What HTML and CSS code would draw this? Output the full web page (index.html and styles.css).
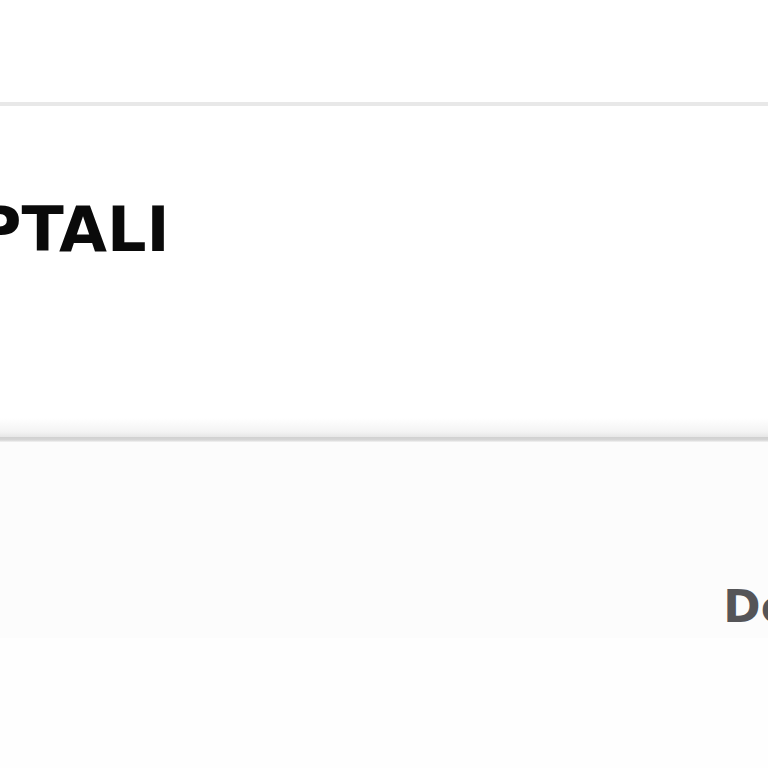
FILE: index.html
```html
<!DOCTYPE html>
<html lang="tr">
<head>
    <meta charset="UTF-8">
    <meta name="viewport" content="width=device-width, initial-scale=1.0">
    <title>Kaptali</title>
    <link rel="stylesheet" href="styles.css">
</head>
<body>
    <div class="top-space"></div>
    <!-- page header with the brand name -->
    <header class="header">
        <h1 class="brand">KAPTALI</h1>
    </header>
    <div class="header-shadow"></div>
    <!-- grey strip under the header -->
    <section class="strip">
        <p class="strip-text">Dönem</p>
    </section>
    <div class="bottom-space"></div>
</body>
</html>
```

FILE: styles.css
```css
* {
    margin: 0;
    padding: 0;
    box-sizing: border-box;
}
body {
    font-family: "DejaVu Sans", sans-serif;
    background-color: #fefefe;
    overflow: hidden;
}
.top-space {
    height: 102px;
    background-color: #ffffff;
}
.header {
    height: 335px;
    border-top: 4px solid #e8e8e8;
    background: linear-gradient(to bottom, #ffffff 0, #ffffff 312px, #f3f3f3 326px, #e6e6e6 331px);
    overflow: hidden;
}
.header-shadow {
    height: 5px;
    background: linear-gradient(to bottom, #d0d0d0 0, #d6d6d6 3px, #f4f4f4 5px);
}
.brand {
    font-size: 62px;
    font-weight: 700;
    color: #0a0a0a;
    margin-top: 93px;
    margin-left: -120px;
    line-height: 1;
    white-space: nowrap;
}
.strip {
    height: 196px;
    background-color: #fcfcfc;
    display: flex;
    justify-content: flex-end;
    overflow: hidden;
}
.strip-text {
    font-size: 45px;
    font-weight: 700;
    color: #555558;
    margin-top: 142px;
    margin-right: -133px;
    line-height: 1;
    white-space: nowrap;
}
.bottom-space {
    height: 130px;
    background-color: #fefefe;
}
```
